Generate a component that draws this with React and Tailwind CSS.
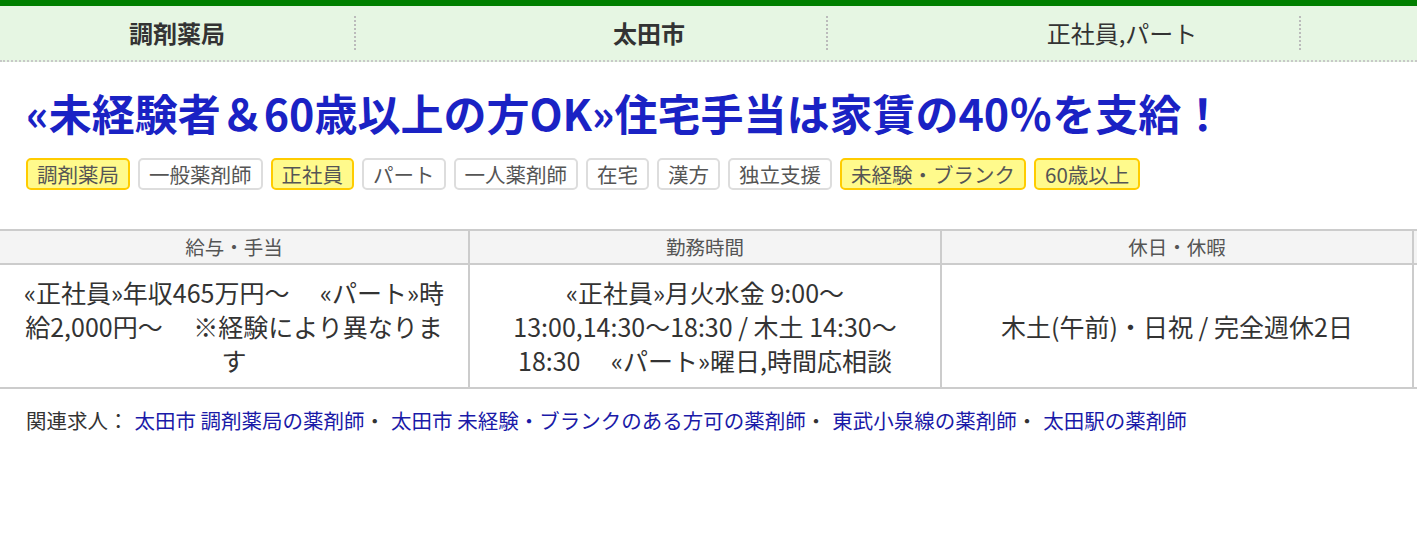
import React from "react";

const tags = [
  { label: "調剤薬局", hot: true },
  { label: "一般薬剤師" },
  { label: "正社員", hot: true },
  { label: "パート" },
  { label: "一人薬剤師" },
  { label: "在宅" },
  { label: "漢方" },
  { label: "独立支援" },
  { label: "未経験・ブランク", hot: true },
  { label: "60歳以上", hot: true },
];

const related = [
  "太田市 調剤薬局の薬剤師",
  "太田市 未経験・ブランクのある方可の薬剤師",
  "東武小泉線の薬剤師",
  "太田駅の薬剤師",
];

const App = () => {
  return (
    <div className="min-h-[534px] w-[1417px] overflow-hidden bg-white font-['Noto_Sans_CJK_JP','Noto_Sans',sans-serif] text-[#333]">
      {/* Summary bar */}
      <div className="h-[6px] bg-[#008000]" />
      <div className="border-b-2 border-dotted border-[#c8c8c8] bg-[#e6f6e3]">
        <div className="grid h-[54px] grid-cols-[472px_473px_472px] items-center">
          <div className="flex h-[34px] w-[356px] items-center justify-center border-r-2 border-dotted border-[#bbb] text-[24px] font-bold">
            調剤薬局
          </div>
          <div className="flex h-[34px] w-[356px] items-center justify-center border-r-2 border-dotted border-[#bbb] text-[24px] font-bold">
            太田市
          </div>
          <div className="flex h-[34px] w-[356px] items-center justify-center border-r-2 border-dotted border-[#bbb] text-[24px]">
            正社員,パート
          </div>
        </div>
      </div>

      {/* Title + tags */}
      <div className="px-[26px] pt-[24px]">
        <h1 className="text-[43px] font-bold leading-[52px] text-[#1a22c4]">
          «未経験者＆60歳以上の方OK»住宅手当は家賃の40％を支給！
        </h1>
        <div className="mt-[20px] flex flex-wrap gap-[8px]">
          {tags.map((t) => (
            <span
              key={t.label}
              className={
                t.hot
                  ? "rounded-[5px] border-2 border-[#ffcc00] bg-[#fffa8c] px-[9px] text-[20.5px] leading-[28px] text-[#555]"
                  : "rounded-[5px] border-2 border-[#dddddd] bg-white px-[9px] text-[20.5px] leading-[28px] text-[#555]"
              }
            >
              {t.label}
            </span>
          ))}
        </div>
      </div>

      {/* Conditions table */}
      <div className="mt-[39px] w-[1430px] border-y-2 border-[#ccc]">
        <div className="grid grid-cols-[470px_472px_472px_16px] border-b-2 border-[#ccc] bg-[#f4f4f4] text-[19.5px] leading-[32px] text-[#555]">
          <div className="border-r-2 border-[#ccc] text-center">給与・手当</div>
          <div className="border-r-2 border-[#ccc] text-center">勤務時間</div>
          <div className="border-r-2 border-[#ccc] text-center">休日・休暇</div>
          <div />
        </div>
        <div className="grid grid-cols-[470px_472px_472px_16px] text-[25px] leading-[34px] text-[#333]">
          <div className="flex flex-col items-center justify-center border-r-2 border-[#ccc] py-[10px] text-center">
            <span>«正社員»年収465万円～　 «パート»時</span>
            <span>給2,000円～　 ※経験により異なりま</span>
            <span>す</span>
          </div>
          <div className="flex flex-col items-center justify-center border-r-2 border-[#ccc] py-[10px] text-center">
            <span>«正社員»月火水金 9:00～</span>
            <span>13:00,14:30～18:30 / 木土 14:30～</span>
            <span>18:30　 «パート»曜日,時間応相談</span>
          </div>
          <div className="flex items-center justify-center border-r-2 border-[#ccc] py-[10px] text-center">
            木土(午前)・日祝 / 完全週休2日
          </div>
          <div />
        </div>
      </div>

      {/* Related jobs */}
      <div className="px-[26px] pt-[17px] text-[20.5px] leading-[28px]">
        <span className="text-[#333]">関連求人：</span>
        {related.map((r, i) => (
          <span key={r} className="ml-[6px]">
            <a href="#" className="text-[#1a1aa8]">
              {r}
            </a>
            {i < related.length - 1 && <span className="text-[#333]">・</span>}
          </span>
        ))}
      </div>
    </div>
  );
};

export default App;
